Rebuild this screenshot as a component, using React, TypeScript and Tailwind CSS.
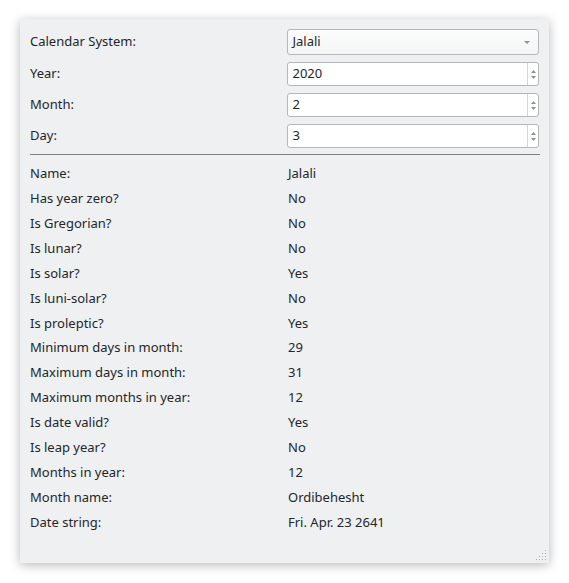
import React from 'react';

const info: [string, string][] = [
  ['Name:', 'Jalali'],
  ['Has year zero?', 'No'],
  ['Is Gregorian?', 'No'],
  ['Is lunar?', 'No'],
  ['Is solar?', 'Yes'],
  ['Is luni-solar?', 'No'],
  ['Is proleptic?', 'Yes'],
  ['Minimum days in month:', '29'],
  ['Maximum days in month:', '31'],
  ['Maximum months in year:', '12'],
  ['Is date valid?', 'Yes'],
  ['Is leap year?', 'No'],
  ['Months in year:', '12'],
  ['Month name:', 'Ordibehesht'],
  ['Date string:', 'Fri. Apr. 23 2641'],
];

const SpinBox: React.FC<{ value: string }> = ({ value }) => (
  <div className="flex h-[24px] w-[252px] rounded-[3px] border border-[#b4b6b8] bg-white">
    <div className="flex flex-1 items-center pl-[4px]">{value}</div>
    <div className="flex w-[11px] flex-col items-center justify-center gap-[3px] border-l border-[#d2d4d6]">
      <svg width="5" height="3" viewBox="0 0 5 3"><path d="M0 3 L2.5 0 L5 3 Z" fill="#8e9092" /></svg>
      <svg width="5" height="3" viewBox="0 0 5 3"><path d="M0 0 L2.5 3 L5 0 Z" fill="#8e9092" /></svg>
    </div>
  </div>
);

export default function App() {
  return (
    <div
      className="min-h-[583px] bg-white pl-[20px] pt-[19px] text-[13px] text-[#232629]"
      style={{ fontFamily: '"Noto Sans", sans-serif' }}
    >
      <div className="relative h-[544px] w-[529px] bg-[#eff0f1] px-[10px] pt-[10px] shadow-[0_2px_10px_rgba(0,0,0,0.28)]">
        {/* editable fields */}
        <div className="flex h-[26px] items-center">
          <div className="w-[258px]">Calendar System:</div>
          <div className="flex h-[26px] w-[252px] items-center justify-between rounded-[3px] border border-[#b4b6b8] bg-gradient-to-b from-[#fcfcfc] to-[#f4f5f5] pl-[4px] pr-[8px]">
            <span>Jalali</span>
            <svg width="6" height="3" viewBox="0 0 6 3"><path d="M0 0 L3 3 L6 0 Z" fill="#909294" /></svg>
          </div>
        </div>
        <div className="mt-[7px] flex items-center">
          <div className="w-[258px]">Year:</div>
          <SpinBox value="2020" />
        </div>
        <div className="mt-[7px] flex items-center">
          <div className="w-[258px]">Month:</div>
          <SpinBox value="2" />
        </div>
        <div className="mt-[7px] flex items-center">
          <div className="w-[258px]">Day:</div>
          <SpinBox value="3" />
        </div>
        <div className="mt-[6px] h-px w-[510px] bg-[#7e8082]" />

        {/* calendar info */}
        <div className="mt-[6px] flex flex-col">
          {info.map(([label, value], i) => (
            <div key={label} className={`flex items-center ${i === 7 ? 'h-[24px]' : 'h-[25px]'}`}>
              <div className="w-[258px]">{label}</div>
              <div>{value}</div>
            </div>
          ))}
        </div>

        {/* resize grip */}
        <svg className="absolute bottom-[2px] right-[2px]" width="11" height="11" viewBox="0 0 11 11">
          {[[9, 0], [6, 3], [9, 3], [3, 6], [6, 6], [9, 6], [0, 9], [3, 9], [6, 9], [9, 9]].map(([x, y]) => (
            <rect key={`${x}-${y}`} x={x} y={y} width="1" height="1" fill="#a8aaac" />
          ))}
        </svg>
      </div>
    </div>
  );
}
